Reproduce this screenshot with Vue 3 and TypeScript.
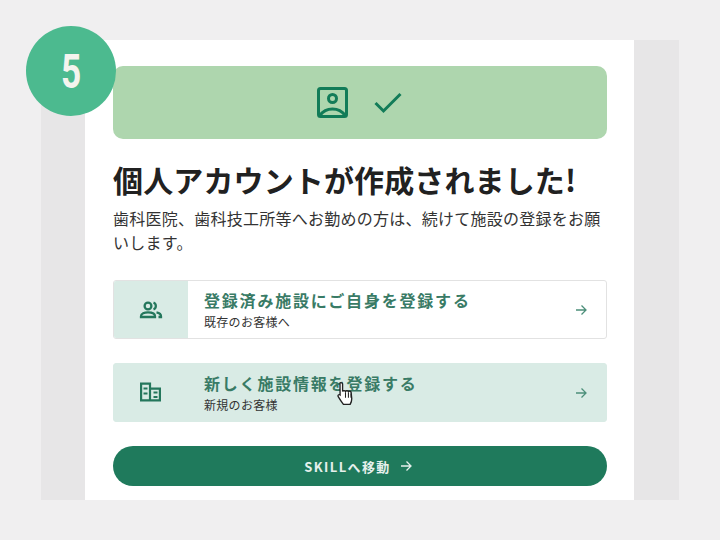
<script setup lang="ts">
interface Row { title: string; sub: string; icon: string; active: boolean }
const rows: Row[] = [
  { title: '登録済み施設にご自身を登録する', sub: '既存のお客様へ', icon: 'people', active: false },
  { title: '新しく施設情報を登録する', sub: '新規のお客様', icon: 'building', active: true },
]
</script>

<template>
  <div class="page">
    <div class="stage">
      <div class="badge"><span>5</span></div>
      <main class="card">
        <div class="banner">
          <svg width="31" height="31" viewBox="0 0 31 31" fill="none" stroke="#127c58" stroke-width="3">
            <rect x="1.500" y="1.500" width="28" height="28" rx="2" />
            <circle cx="15.500" cy="11.500" r="4" />
            <path d="M3 28.500c3-4.500 8-6.500 12.500-6.500S25 24 28 28.500" />
          </svg>
          <svg width="28" height="22" viewBox="0 0 28 22" fill="none" stroke="#127c58" stroke-width="3">
            <path d="M1.500 11 9.500 19 26.500 2" />
          </svg>
        </div>
        <h1>個人アカウントが作成されました!</h1>
        <p class="lead">歯科医院、歯科技工所等へお勤めの方は、続けて施設の登録をお願いします。</p>
        <div class="rows">
          <div v-for="r in rows" :key="r.title" class="row" :class="{ active: r.active }">
            <div class="row-icon">
              <svg v-if="r.icon === 'people'" width="24" height="24" viewBox="0 0 24 24" fill="none" stroke="#24775c" stroke-width="2.300">
                <circle cx="9" cy="8" r="3.400" />
                <path d="M2 19v-.8c0-2.600 3.400-3.800 7-3.800s7 1.200 7 3.800v.8z" />
                <path d="M14.500 4.700a3.500 3.500 0 0 1 0 6.600M17.500 14.300c2.700.5 4.500 1.800 4.500 4V19h-2.500" />
              </svg>
              <svg v-else width="24" height="24" viewBox="0 0 24 24" fill="none" stroke="#24775c" stroke-width="2.200">
                <path d="M2.100 20V2.600H11V20M11 7.600h9.900V20M1 19.400h21" />
                <path d="M4.500 7.500h4M4.500 12.500h4M14.500 11.500h4M14.500 16h4" />
              </svg>
            </div>
            <div class="row-text">
              <div class="row-title">{{ r.title }}</div>
              <div class="row-sub">{{ r.sub }}</div>
            </div>
            <svg class="arrow" width="12" height="12" viewBox="0 0 12 12" fill="none" stroke="#4c8f7a" stroke-width="1.300">
              <path d="M1 6h10M6.500 1.500 11 6l-4.500 4.500" />
            </svg>
          </div>
        </div>
        <div class="cta">
          <span>SKILLへ移動</span>
          <svg width="12" height="12" viewBox="0 0 12 12" fill="none" stroke="#e6f0ec" stroke-width="1.300">
            <path d="M1 6h10M6.500 1.500 11 6l-4.500 4.500" />
          </svg>
        </div>
      </main>
      <svg class="cursor" width="19" height="26" viewBox="0 0 17 25">
        <path d="M4 1.500c1 0 1.700.7 1.700 1.700V10c.4-1 2.400-1 2.800 0 .4-.9 2.400-.9 2.800.2.500-.7 2.400-.5 2.600.8l.6 6c.1 2.500-.8 4-1.600 5.500H6.500C5 20.500 3 17.500 1.500 15c-.8-1.300.5-2.500 1.800-1.600l-.1-10.200c0-1 .2-1.700.8-1.700z" fill="#fff" stroke="#222" stroke-width="1.300" />
        <path d="M8.500 11v5M11.300 11v5M13.800 12v4" stroke="#222" stroke-width="1" fill="none" />
      </svg>
    </div>
  </div>
</template>

<style>
html, body { margin: 0; background: #f0eff0; }
</style>

<style scoped>
.page {
  width: 720px;
  height: 540px;
  box-sizing: border-box;
  padding: 40px 41px;
  background: #f0eff0;
  font-family: "Noto Sans CJK JP", "Noto Sans", sans-serif;
  overflow: hidden;
}
.stage {
  position: relative;
  height: 460px;
  padding: 0 45px 0 44px;
  background: #e7e6e7;
}
.badge {
  position: absolute;
  left: -15px;
  top: -14px;
  width: 90px;
  height: 90px;
  border-radius: 50%;
  background: #4cba8f;
  color: #f4f4ee;
  display: flex;
  align-items: center;
  justify-content: center;
  font: 700 49px/1 Roboto, "Liberation Sans", sans-serif;
}
.badge span {
  display: block;
  transform: scaleX(0.72);
}
.card {
  height: 100%;
  box-sizing: border-box;
  padding: 26px 27px 0 28px;
  background: #fff;
}
.banner {
  height: 73px;
  box-sizing: border-box;
  padding-right: 1px;
  border-radius: 10px;
  background: #aed6ae;
  display: flex;
  align-items: center;
  justify-content: center;
  gap: 26px;
}
h1 {
  margin: 22px 0 0;
  font-size: 30px;
  line-height: 36px;
  font-weight: 700;
  letter-spacing: 0.130px;
  color: #212121;
  white-space: nowrap;
}
.lead {
  margin: 9px 0 0;
  font-size: 16px;
  line-height: 24px;
  letter-spacing: 0.250px;
  color: #333;
}
.rows {
  margin-top: 26px;
  display: flex;
  flex-direction: column;
  gap: 24px;
}
.row {
  height: 59px;
  box-sizing: border-box;
  border: 1px solid #e2e2e2;
  border-radius: 3px;
  display: flex;
  align-items: center;
  overflow: hidden;
}
.row.active {
  background: #d9ebe5;
  border-color: #d9ebe5;
}
.row-icon {
  flex: none;
  width: 74px;
  height: 100%;
  background: #d9ebe5;
  display: flex;
  align-items: center;
  justify-content: center;
}
.row-text {
  flex: 1;
  padding: 1px 0 0 16px;
}
.row-title {
  font-size: 16px;
  line-height: 22px;
  font-weight: 700;
  letter-spacing: 1.800px;
  color: #397b66;
}
.row-sub {
  margin-top: 2px;
  font-size: 12px;
  line-height: 18px;
  letter-spacing: 0.300px;
  color: #333;
}
.arrow { flex: none; margin-right: 19px; }
.cta {
  margin-top: 24px;
  height: 40px;
  box-sizing: border-box;
  padding-right: 4px;
  border-radius: 20px;
  background: #1f7a5c;
  color: #e6f0ec;
  display: flex;
  align-items: center;
  justify-content: center;
  gap: 9px;
  font-size: 13px;
  font-weight: 700;
  letter-spacing: 1.400px;
}
.cursor {
  position: absolute;
  left: 295px;
  top: 341px;
}
</style>
